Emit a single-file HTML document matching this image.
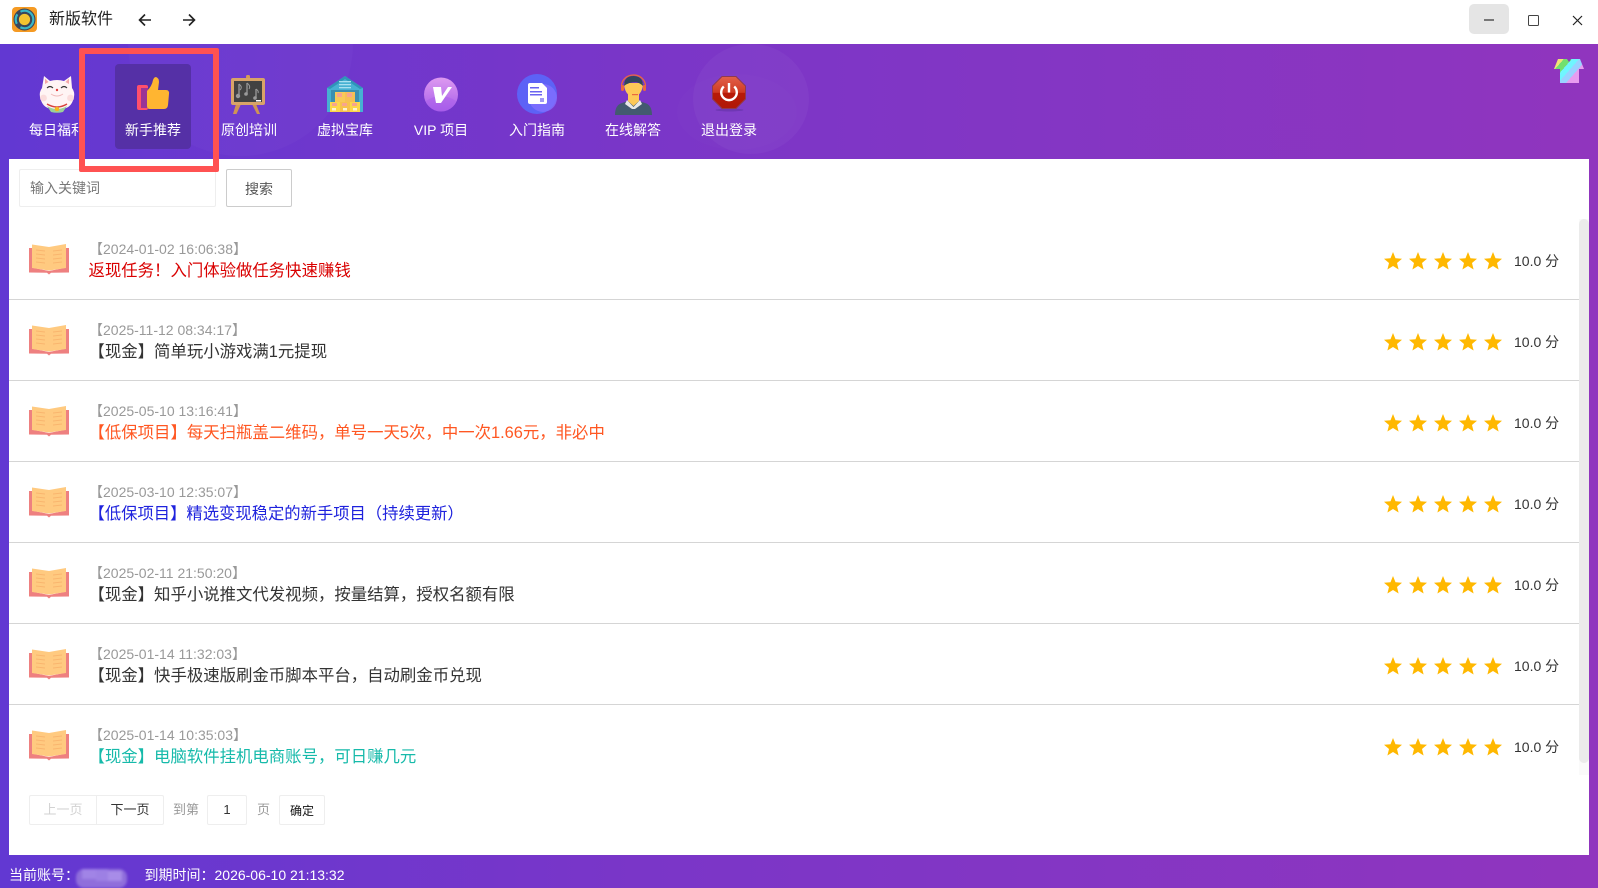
<!DOCTYPE html>
<html lang="zh-CN">
<head>
<meta charset="utf-8">
<style>
html,body{margin:0;padding:0;width:1598px;height:888px;overflow:hidden;background:#fff;font-family:"Liberation Sans","Noto Sans CJK SC",sans-serif}
.a{position:absolute}
#hdr{left:0;top:44px;width:1598px;height:844px;background:linear-gradient(90deg,#6238d2 0%,#7a36c8 40%,#9035be 100%);overflow:hidden}
.lbl{position:absolute;top:120px;width:96px;text-align:center;color:#fff;font-size:14px;line-height:20px;white-space:nowrap}
.date{position:absolute;left:89px;color:#999;font-size:14px;line-height:18px;white-space:nowrap}
.ttl{position:absolute;left:88.5px;font-size:16.4px;line-height:22px;white-space:nowrap;color:#333}
.hr{position:absolute;left:9px;width:1570px;height:1px;background:#d5d5d5}
.score{position:absolute;left:1514px;color:#333;font-size:14px;line-height:20px;white-space:nowrap}
.pg{position:absolute;top:795px;height:28px;border:1px solid #eee;text-align:center;font-size:13px;line-height:28px;background:#fff;color:#333}
.pt{position:absolute;top:800px;font-size:13px;line-height:20px;color:#999}
</style>
</head>
<body>
<!-- title bar -->
<svg class="a" style="left:12px;top:7px" width="25" height="25" viewBox="0 0 25 25"><rect width="25" height="25" rx="4" fill="#f59a23"/><circle cx="12.5" cy="12.5" r="11" fill="#3c4658"/><circle cx="12.5" cy="12.5" r="8.8" fill="none" stroke="#39b7c8" stroke-width="2.2" stroke-dasharray="18 5 10 4"/><circle cx="12.5" cy="12.5" r="5.6" fill="#f4c430"/></svg>
<div class="a" style="left:49px;top:9px;font-size:16px;line-height:22px;color:#222">新版软件</div>
<svg class="a" style="left:138px;top:13px" width="14" height="14" viewBox="0 0 14 14" fill="none" stroke="#222" stroke-width="1.6"><path d="M13 7H1.5M7 1.5L1.5 7L7 12.5"/></svg>
<svg class="a" style="left:182px;top:13px" width="14" height="14" viewBox="0 0 14 14" fill="none" stroke="#222" stroke-width="1.6"><path d="M1 7H12.5M7 1.5L12.5 7L7 12.5"/></svg>
<div class="a" style="left:1469px;top:4px;width:40px;height:30px;background:#e5e5e5;border-radius:5px"></div>
<div class="a" style="left:1484px;top:19px;width:10px;height:2px;background:#777"></div>
<div class="a" style="left:1528px;top:15px;width:8.5px;height:8.5px;border:1.3px solid #444;border-radius:1.5px"></div>
<svg class="a" style="left:1572px;top:15px" width="11" height="11" viewBox="0 0 11 11" fill="none" stroke="#222" stroke-width="1.2"><path d="M1 1L10 10M10 1L1 10"/></svg>

<!-- purple background -->
<div id="hdr" class="a">
  <div class="a" style="left:128px;top:-113px;width:225px;height:225px;border-radius:50%;background:rgba(255,255,255,.022)"></div>
  <div class="a" style="left:693px;top:0;width:116px;height:110px;border-radius:50%;background:rgba(255,255,255,.035)"></div>
  <div class="a" style="left:677px;top:30px;width:120px;height:76px;border-radius:50%;background:rgba(255,255,255,.012)"></div>
</div>

<!-- active tile -->
<div class="a" style="left:115px;top:64px;width:76px;height:85px;background:#5530a6;border-radius:4px"></div>

<!-- nav icons -->
<svg class="a" style="left:38px;top:75px" width="38" height="38" viewBox="0 0 38 38">
  <path d="M6 1L12 6Q19 4 26 6L33 1L34 13Q37 17 36 22Q34 31 28 33Q19 37 10 33Q4 31 2 22Q1 17 4 13Z" fill="#fff4f4"/>
  <path d="M7 3.500L10.500 7L7 9ZM31 3.500L27.500 7L31 9Z" fill="#f4a7a7"/>
  <path d="M9 13Q12 10 15 13M23 13Q26 10 29 13" stroke="#333" stroke-width="1.1" fill="none"/>
  <circle cx="19" cy="15" r="1.200" fill="#e04040"/>
  <path d="M13 19Q19 23 25 19" stroke="#f0b8b8" stroke-width="1" fill="none"/>
  <path d="M9 31Q19 37 29 31L25 37Q19 38.500 13 37Z" fill="#9ad09a"/>
  <path d="M9 29Q19 35 29 29" stroke="#d8403c" stroke-width="1.400" fill="none"/>
  <circle cx="19" cy="34" r="2.300" fill="#f4b71e"/>
  <circle cx="5.500" cy="23" r="3.400" fill="#fbdcdc"/><circle cx="32.500" cy="23" r="3.400" fill="#fbdcdc"/>
</svg>
<svg class="a" style="left:137px;top:77px" width="33" height="33" viewBox="0 0 33 33">
  <rect x="0" y="8" width="11" height="25" rx="2" fill="#ff4f6c"/>
  <rect x="4" y="11" width="7" height="20" fill="#9a3496"/>
  <path d="M10 14Q15 9 16 3Q17 0 19 0Q22 1 22 5L21 13H29Q32.500 13 32 17L31 28Q30.500 32 27 32H13Q10 32 10 29Z" fill="#ffb531"/>
</svg>
<svg class="a" style="left:230px;top:75px" width="36" height="40" viewBox="0 0 36 40">
  <rect x="16" y="0" width="4" height="5" rx="1.500" fill="#d49a5a"/>
  <path d="M6 29L3 39H6.500L11 29ZM26 29L30 39H27L22 29Z" fill="#cf9355"/>
  <rect x="1" y="3" width="34" height="27" rx="2" fill="#d9a368"/>
  <rect x="4" y="6" width="28" height="21" fill="#424242"/>
  <path d="M9 9V21M17 8V19M26 14V23" stroke="#9a9a9a" stroke-width="1.300"/>
  <path d="M9 9Q13 12 10 15M17 8Q21 11 19 14M26 14Q29 16 28 18" stroke="#9a9a9a" fill="none"/>
  <circle cx="8" cy="21" r="2.200" fill="#9a9a9a"/><circle cx="16" cy="19" r="1.800" fill="#9a9a9a"/><circle cx="25" cy="23" r="1.800" fill="#9a9a9a"/>
  <rect x="26" y="25" width="5" height="1.500" fill="#fff"/>
</svg>
<svg class="a" style="left:327px;top:76px" width="36" height="37" viewBox="0 0 36 37">
  <path d="M0 12L18 0L36 12V36H0Z" fill="#46b1d2"/>
  <path d="M0 12L18 0L36 12L33 13L18 3L3 13Z" fill="#2f95b8"/>
  <rect x="12" y="5" width="12" height="1.300" fill="#a9e0f0"/><rect x="12" y="8" width="12" height="1.300" fill="#a9e0f0"/><rect x="12" y="11" width="12" height="1.300" fill="#a9e0f0"/>
  <rect x="4" y="14" width="28" height="22" fill="#3c8fb0"/>
  <rect x="8" y="16" width="10" height="10" fill="#f8c958"/><rect x="18" y="16" width="10" height="10" fill="#f5bf55"/>
  <rect x="3" y="26" width="10" height="10" fill="#fcd74a"/><rect x="13" y="26" width="10" height="10" fill="#f7c24c"/><rect x="23" y="26" width="10" height="10" fill="#fcd74a"/>
  <rect x="10" y="17" width="5" height="4" fill="#f7a48f"/><rect x="20" y="17" width="5" height="4" fill="#f7a48f"/>
  <rect x="5" y="27" width="5" height="3" fill="#f7a48f"/><rect x="15" y="27" width="5" height="3" fill="#f7a48f"/><rect x="25" y="27" width="5" height="3" fill="#f7a48f"/>
  <rect x="5" y="32" width="4" height="2.500" fill="#fff3d0"/><rect x="16" y="32" width="4" height="2.500" fill="#fff3d0"/><rect x="26" y="32" width="4" height="2.500" fill="#fff3d0"/>
</svg>
<svg class="a" style="left:424px;top:77px" width="34" height="35" viewBox="0 0 34 35">
  <defs><linearGradient id="vg" x1="0" y1="0" x2="0" y2="1"><stop offset="0" stop-color="#de9af0"/><stop offset="1" stop-color="#a65cea"/></linearGradient></defs>
  <circle cx="17" cy="17.500" r="17" fill="url(#vg)"/>
  <path d="M2 24Q17 14 32 24Q28 34 17 34.500Q6 34 2 24Z" fill="#a95eea" opacity=".45"/>
  <path d="M9 10H17L18 19L24 10H28L17 26H12Z" fill="#fff"/>
</svg>
<svg class="a" style="left:517px;top:74px" width="40" height="40" viewBox="0 0 40 40">
  <circle cx="20" cy="20" r="20" fill="#5d62f6"/><circle cx="26" cy="24" r="14" fill="#8472ff" opacity=".75"/>
  <path d="M11 11Q11 9 13 9H25L30 14V28Q30 30 28 30H13Q11 30 11 28Z" fill="#fff"/>
  <rect x="13" y="13" width="9" height="1.500" fill="#6a63f0"/><rect x="13" y="17" width="12" height="1.500" fill="#6a63f0"/><rect x="13" y="20" width="12" height="1.500" fill="#6a63f0"/>
  <rect x="23" y="24" width="4" height="4" fill="#a09af5"/>
</svg>
<svg class="a" style="left:615px;top:74px" width="37" height="41" viewBox="0 0 37 41">
  <path d="M0 41Q0 31 7 29L13 27H24L30 29Q37 31 37 41Z" fill="#435a70"/>
  <path d="M12 26L18.500 33L25 26L27 30L20 35H17L10 30Z" fill="#e8e8e8"/>
  <path d="M13 20H24V27L18.500 32L13 27Z" fill="#fdc858"/>
  <path d="M6.500 12A12 11 0 0 1 30.500 12" fill="none" stroke="#e9683f" stroke-width="1.300"/>
  <rect x="6" y="11" width="3" height="6" rx="1.500" fill="#e9683f"/><rect x="28" y="11" width="3" height="6" rx="1.500" fill="#e9683f"/>
  <path d="M9 9Q9 20 18.500 24Q28 20 28 9Z" fill="#fdc858"/>
  <path d="M9 12Q9 2 18.500 2Q28 2 28 12Q25 9 21 8Q14 8 9 12Z" fill="#32475e"/>
  <rect x="17" y="20" width="6" height="1.200" fill="#e9683f"/>
</svg>
<svg class="a" style="left:712px;top:76px" width="35" height="36" viewBox="0 0 35 36">
  <defs><linearGradient id="pg1" x1="0" y1="0" x2="0" y2="1"><stop offset="0" stop-color="#e2604a"/><stop offset=".5" stop-color="#cf3a22"/><stop offset=".52" stop-color="#b81a08"/><stop offset="1" stop-color="#b01808"/></linearGradient></defs>
  <ellipse cx="17.500" cy="34" rx="14" ry="1.500" fill="#5d2f9f" opacity=".5"/>
  <path d="M10 .5H24L33.500 10V23L24 32.500H10L.5 23V10Z" fill="url(#pg1)" stroke="#8f3a50" stroke-width="1"/>
  <path d="M11.800 10.500A7.800 7.800 0 1 0 22.200 10.500" fill="none" stroke="#fff" stroke-width="2.400"/>
  <rect x="15.800" y="7" width="2.400" height="9.500" fill="#fff"/>
</svg>

<!-- labels -->
<div class="lbl" style="left:9px">每日福利</div>
<div class="lbl" style="left:105px">新手推荐</div>
<div class="lbl" style="left:201px">原创培训</div>
<div class="lbl" style="left:297px">虚拟宝库</div>
<div class="lbl" style="left:393px">VIP 项目</div>
<div class="lbl" style="left:489px">入门指南</div>
<div class="lbl" style="left:585px">在线解答</div>
<div class="lbl" style="left:681px">退出登录</div>

<!-- shirt -->
<svg class="a" style="left:1554px;top:59px" width="30" height="24" viewBox="0 0 30 24">
  <defs><linearGradient id="sg" x1="0" y1="0" x2="1" y2=".7">
    <stop offset="0" stop-color="#f3e377"/><stop offset=".22" stop-color="#f3e377"/>
    <stop offset=".22" stop-color="#72e06f"/><stop offset=".4" stop-color="#72e06f"/>
    <stop offset=".4" stop-color="#6ff6ff"/><stop offset=".56" stop-color="#6ff6ff"/>
    <stop offset=".56" stop-color="#9ad2ff"/><stop offset=".74" stop-color="#9ad2ff"/>
    <stop offset=".74" stop-color="#e89cf0"/><stop offset="1" stop-color="#e89cf0"/></linearGradient></defs>
  <path d="M4 0H13L15 3L17 0H26L30 10H25V24H6V10H0Z" fill="url(#sg)"/>
</svg>

<!-- content panel -->
<div class="a" style="left:9px;top:159px;width:1580px;height:696px;background:#fff"></div>

<!-- search -->
<div class="a" style="left:19px;top:169px;width:195px;height:36px;border:1px solid #eee;border-radius:2px;font-size:14px;line-height:37px;color:#777"><span style="margin-left:10px">输入关键词</span></div>
<div class="a" style="left:226px;top:169px;width:64px;height:36px;border:1px solid #ccc;border-radius:2px;text-align:center;font-size:14px;line-height:38px;color:#555">搜索</div>

<!-- red box -->
<div class="a" style="left:79px;top:48px;width:128px;height:112px;border:6px solid #ff5252;border-radius:2px"></div>

<!-- scrollbar -->
<div class="a" style="left:1579px;top:219px;width:10px;height:556px;background:#fafafa"></div>
<div class="a" style="left:1579px;top:219px;width:10px;height:544px;background:#ebebeb;border-radius:5px"></div>

<svg width="0" height="0" style="position:absolute">
  <defs>
    <g id="book">
      <path d="M0 5H5V25L20 28L35 25V5H40V29.500L22 29.800L20 31.500L18 29.800L0 29.500Z" fill="#ee8080"/>
      <path d="M3 1.500L20 4L37 1V25L20 27.500L3 25Z" fill="#ffca80"/>
      <path d="M7 7L16 8M7 11L16 12M7 15L16 16M7 19L16 20M24 8L33 7M24 12L33 11M24 16L33 15M24 20L33 19" stroke="#f9b56e" stroke-width=".9" fill="none"/>
    </g>
    <path id="star" d="M9 0L11.500 6.200L18 6.700L13 11L14.600 17.500L9 14L3.400 17.500L5 11L0 6.700L6.500 6.200Z" fill="#ffb800"/>
    <g id="stars">
      <use href="#star" x="0"/><use href="#star" x="25"/><use href="#star" x="50"/><use href="#star" x="75"/><use href="#star" x="100"/>
    </g>
  </defs>
</svg>

<!-- rows -->
<svg class="a" style="left:29px;top:243px" width="40" height="33"><use href="#book"/></svg>
<div class="date" style="top:240px">【2024-01-02 16:06:38】</div>
<div class="ttl" style="top:260px;color:#d90000">返现任务！入门体验做任务快速赚钱</div>
<svg class="a" style="left:1383.5px;top:252px" width="120" height="18"><use href="#stars"/></svg>
<div class="score" style="top:251px">10.0 分</div>
<div class="hr" style="top:299px"></div>

<svg class="a" style="left:29px;top:324px" width="40" height="33"><use href="#book"/></svg>
<div class="date" style="top:321px">【2025-11-12 08:34:17】</div>
<div class="ttl" style="top:341px;color:#333">【现金】简单玩小游戏满1元提现</div>
<svg class="a" style="left:1383.5px;top:333px" width="120" height="18"><use href="#stars"/></svg>
<div class="score" style="top:332px">10.0 分</div>
<div class="hr" style="top:380px"></div>

<svg class="a" style="left:29px;top:405px" width="40" height="33"><use href="#book"/></svg>
<div class="date" style="top:402px">【2025-05-10 13:16:41】</div>
<div class="ttl" style="top:422px;color:#ff5722">【低保项目】每天扫瓶盖二维码，单号一天5次，中一次1.66元，非必中</div>
<svg class="a" style="left:1383.5px;top:414px" width="120" height="18"><use href="#stars"/></svg>
<div class="score" style="top:413px">10.0 分</div>
<div class="hr" style="top:461px"></div>

<svg class="a" style="left:29px;top:486px" width="40" height="33"><use href="#book"/></svg>
<div class="date" style="top:483px">【2025-03-10 12:35:07】</div>
<div class="ttl" style="top:503px;color:#1e22dd;font-size:16.32px">【低保项目】精选变现稳定的新手项目（持续更新）</div>
<svg class="a" style="left:1383.5px;top:495px" width="120" height="18"><use href="#stars"/></svg>
<div class="score" style="top:494px">10.0 分</div>
<div class="hr" style="top:542px"></div>

<svg class="a" style="left:29px;top:567px" width="40" height="33"><use href="#book"/></svg>
<div class="date" style="top:564px">【2025-02-11 21:50:20】</div>
<div class="ttl" style="top:584px;color:#333">【现金】知乎小说推文代发视频，按量结算，授权名额有限</div>
<svg class="a" style="left:1383.5px;top:576px" width="120" height="18"><use href="#stars"/></svg>
<div class="score" style="top:575px">10.0 分</div>
<div class="hr" style="top:623px"></div>

<svg class="a" style="left:29px;top:648px" width="40" height="33"><use href="#book"/></svg>
<div class="date" style="top:645px">【2025-01-14 11:32:03】</div>
<div class="ttl" style="top:665px;color:#333">【现金】快手极速版刷金币脚本平台，自动刷金币兑现</div>
<svg class="a" style="left:1383.5px;top:657px" width="120" height="18"><use href="#stars"/></svg>
<div class="score" style="top:656px">10.0 分</div>
<div class="hr" style="top:704px"></div>

<svg class="a" style="left:29px;top:729px" width="40" height="33"><use href="#book"/></svg>
<div class="date" style="top:726px">【2025-01-14 10:35:03】</div>
<div class="ttl" style="top:746px;color:#16baaa">【现金】电脑软件挂机电商账号，可日赚几元</div>
<svg class="a" style="left:1383.5px;top:738px" width="120" height="18"><use href="#stars"/></svg>
<div class="score" style="top:737px">10.0 分</div>

<!-- pagination -->
<div class="pg" style="left:29px;width:66px;color:#d2d2d2;border-radius:2px 0 0 2px">上一页</div>
<div class="pg" style="left:96px;width:66px;border-radius:0 2px 2px 0">下一页</div>
<div class="pt" style="left:173px">到第</div>
<div class="pg" style="left:207px;width:38px;border-radius:2px">1</div>
<div class="pt" style="left:257px">页</div>
<div class="pg" style="left:279px;width:44px;border-radius:2px;color:#111;font-size:12px;line-height:31px">确定</div>

<!-- status bar -->
<div class="a" style="left:9px;top:865px;font-size:14px;line-height:20px;color:#fff;white-space:nowrap">当前账号：</div>
<div class="a" style="left:76px;top:869px;width:51px;height:19px;background:#8f6edb;border-radius:8px;filter:blur(1.2px);overflow:hidden">
  <div class="a" style="left:6px;top:0;width:14px;height:10px;background:#a184e6"></div>
  <div class="a" style="left:20px;top:0;width:12px;height:12px;background:#9d80e4"></div>
  <div class="a" style="left:32px;top:2px;width:14px;height:10px;background:#a88ce8"></div>
</div>
<div class="a" style="left:144.5px;top:865px;font-size:14px;line-height:20px;color:#fff;white-space:nowrap">到期时间：2026-06-10 21:13:32</div>
</body>
</html>
